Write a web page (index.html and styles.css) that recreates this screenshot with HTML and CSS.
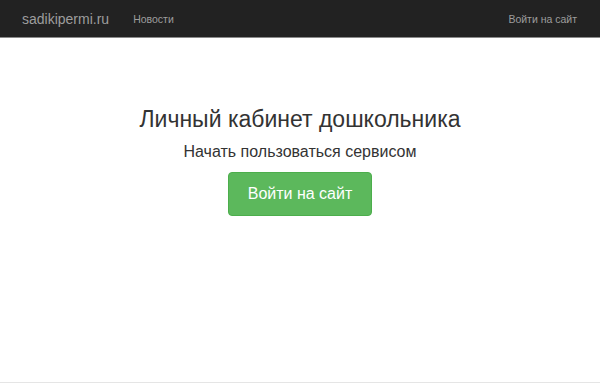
FILE: index.html
```html
<!DOCTYPE html>
<html lang="ru">
<head>
  <meta charset="UTF-8" />
  <title>sadikipermi.ru</title>
  <link rel="stylesheet" href="styles.css">
</head>
<body>

  <!-- Top navigation -->
  <nav class="navbar">
    <div class="navbar-left">
      <a class="brand" href="#">sadikipermi.ru</a>
      <a class="nav-link" href="#">Новости</a>
    </div>
    <a class="nav-link" href="#">Войти на сайт</a>
  </nav>

  <!-- Intro -->
  <div class="jumbotron">
    <h1>Личный кабинет дошкольника</h1>
    <p class="lead">Начать пользоваться сервисом</p>
    <a class="btn-success" href="#">Войти на сайт</a>
  </div>

  <div class="footer"></div>
</body>
</html>
```

FILE: styles.css
```css
/* Basic reset */
* {
  margin: 0;
  padding: 0;
  box-sizing: border-box;
}

html, body {
  height: 100%;
}

body {
  font-family: "Liberation Sans", Arial, sans-serif;
  background-color: #fff;
  color: #333;
  display: flex;
  flex-direction: column;
}

a {
  text-decoration: none;
}

/* Navbar */
.navbar {
  height: 38px;
  background-color: #222;
  border-bottom: 1px solid #8a8a8a;
  display: flex;
  align-items: center;
  justify-content: space-between;
  padding: 0 23px 0 22px;
}
.navbar-left {
  display: flex;
  align-items: center;
}
.brand {
  font-size: 14px;
  color: #9d9d9d;
  margin-right: 24px;
}
.nav-link {
  font-size: 10.5px;
  color: #9d9d9d;
}

/* Jumbotron */
.jumbotron {
  flex: 1;
  text-align: center;
  padding-top: 66px;
}
.jumbotron h1 {
  font-size: 23px;
  font-weight: normal;
  line-height: 30px;
  color: #333;
}
.lead {
  font-size: 16px;
  line-height: 20px;
  margin-top: 8px;
  color: #333;
}
.btn-success {
  display: inline-block;
  margin-top: 10px;
  width: 144px;
  height: 44px;
  line-height: 42px;
  font-size: 16px;
  color: #fff;
  background-color: #5cb85c;
  border: 1px solid #4cae4c;
  border-radius: 4px;
}

/* Footer line */
.footer {
  height: 2px;
  border-top: 1px solid #e5e5e5;
}
```
